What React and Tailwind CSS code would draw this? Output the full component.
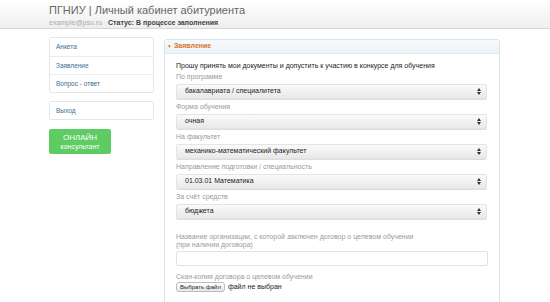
import React from 'react';

const selects = [
  { label: 'По программе', value: 'бакалавриата / специалитета' },
  { label: 'Форма обучения', value: 'очная' },
  { label: 'На факультет', value: 'механико-математический факультет' },
  { label: 'Направление подготовки / специальность', value: '01.03.01 Математика' },
  { label: 'За счёт средств', value: 'бюджета' },
];

function Arrows() {
  return (
    <svg width="4" height="7" viewBox="0 0 4 7" className="shrink-0">
      <path d="M0 3 L2 0 L4 3 Z" fill="#333" />
      <path d="M0 4 L2 7 L4 4 Z" fill="#333" />
    </svg>
  );
}

function FakeSelect({ label, value }) {
  return (
    <div className="flex flex-col">
      <div className="text-[7px] leading-[10px] text-[#999] h-[10px]">{label}</div>
      <div className="mt-[2px] h-[15px] w-[311px] rounded-[2px] border border-[#e4e4e4] bg-gradient-to-b from-[#fafafa] to-[#e9e9e9] flex items-center justify-between pl-[8px] pr-[5px] shadow-[0_1px_0_#ddd]">
        <span className="text-[7px] text-[#222]">{value}</span>
        <Arrows />
      </div>
    </div>
  );
}

export default function App() {
  return (
    <div className="w-[550px] h-[302px] overflow-hidden bg-white font-['Liberation_Sans',Arial,sans-serif]">
      <div className="h-[29px] bg-gradient-to-b from-white to-[#eeeeee] border-b border-[#d6d6d6] pl-[49px] pt-[4px]">
        <div className="text-[11px] leading-[13px] text-[#666]">
          ПГНИУ | Личный кабинет абитуриента
        </div>
        <div className="flex gap-[6px] text-[7px] leading-[9px] mt-[1px]">
          <span className="text-[#aaa]">example@psu.ru</span>
          <span className="text-[#444] font-bold">Статус: В процессе заполнения</span>
        </div>
      </div>

      <div className="flex pl-[49px] pt-[8px] gap-[10px]">
        <div className="w-[105px] flex flex-col">
          <div className="border border-[#e6e6e6] rounded-[2px] flex flex-col">
            <div className="h-[19px] flex items-center px-[6px] text-[6.5px] text-[#3a6d93] border-b border-[#ececec]">Анкета</div>
            <div className="h-[18px] flex items-center px-[6px] text-[6.5px] text-[#3a6d93] border-b border-[#ececec]">Заявление</div>
            <div className="h-[17px] flex items-center px-[6px] text-[6.5px] text-[#3a6d93]">Вопрос - ответ</div>
          </div>
          <div className="mt-[8px] h-[19px] border border-[#e6e6e6] rounded-[2px] flex items-center px-[6px] text-[6.5px] text-[#3a6d93]">
            Выход
          </div>
          <div className="mt-[9px] w-[62px] h-[25px] rounded-[2px] bg-[#5ecb63] flex flex-col items-center justify-center text-white leading-[9px]">
            <span className="text-[8px]">ОНЛАЙН</span>
            <span className="text-[7px]">консультант</span>
          </div>
        </div>

        <div className="w-[336px] h-[270px] mt-[2px] border border-[#d5e3ea] rounded-[3px] flex flex-col">
          <div className="h-[14px] bg-gradient-to-b from-[#f7fafb] to-[#eef4f7] border-b border-[#dfe9ee] flex items-center pl-[2px] gap-[2px]">
            <span className="text-[5px] text-[#e07b25]">▼</span>
            <span className="text-[7px] font-bold text-[#d9722a]">Заявление</span>
          </div>
          <div className="pl-[11px] pt-[7px] flex flex-col">
            <div className="text-[7px] leading-[10px] text-[#222]">
              Прошу принять мои документы и допустить к участию в конкурсе для обучения
            </div>
            <div className="mt-[1px] flex flex-col gap-[3px]">
              {selects.map((s) => (
                <FakeSelect key={s.label} label={s.label} value={s.value} />
              ))}
            </div>
            <div className="mt-[14px] text-[7px] leading-[8px] text-[#999]">
              Название организации, с которой заключен договор о целевом обучении
              <br />
              (при наличии договора)
            </div>
            <div className="mt-[2px] h-[15px] w-[312px] border border-[#e2e2e2] rounded-[2px] bg-white" />
            <div className="mt-[6px] text-[7px] leading-[9px] text-[#999]">
              Скан-копия договора о целевом обучении
            </div>
            <div className="mt-[1px] flex items-center gap-[3px]">
              <div className="h-[10px] px-[3px] border border-[#bbb] rounded-[3px] bg-gradient-to-b from-white to-[#e8e8e8] flex items-center text-[6px] text-[#222]">
                Выбрать файл
              </div>
              <span className="text-[7px] text-[#222]">файл не выбран</span>
            </div>
          </div>
        </div>
      </div>
    </div>
  );
}
